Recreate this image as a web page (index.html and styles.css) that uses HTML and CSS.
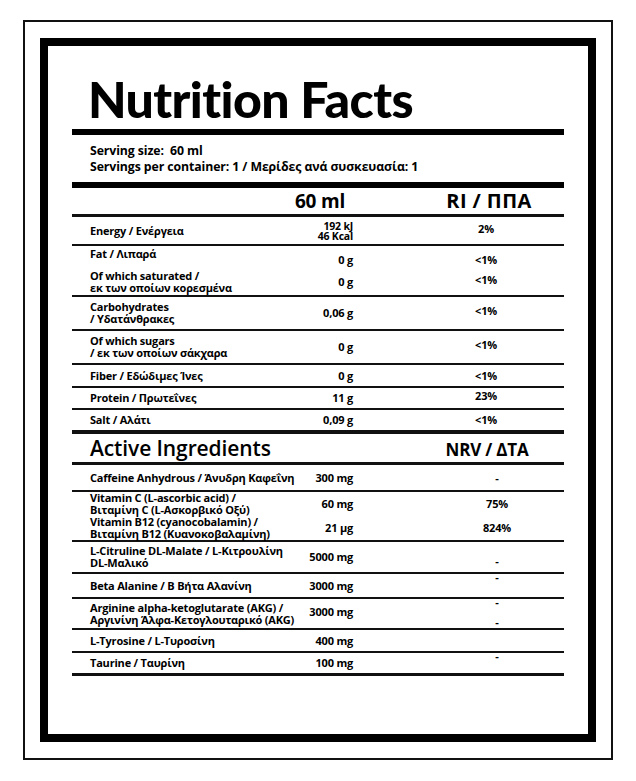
FILE: index.html
```html
<!DOCTYPE html>
<html lang="el">
<head>
<meta charset="utf-8">
<title>Nutrition Facts</title>
<link rel="stylesheet" href="styles.css">
</head>
<body>
<div class="frame">
  <div class="label">
    <h1 class="title">Nutrition Facts</h1>
    <div class="serving">
      <div>Serving size:&nbsp; 60 ml</div>
      <div>Servings per container: 1 / Μερίδες ανά συσκευασία: 1</div>
    </div>

    <div class="nrow head">
      <span></span>
      <span class="val head-val">60 ml</span>
      <span></span>
      <span class="pct head-pct">RI / ΠΠΑ</span>
    </div>
    <div class="nrow energy">
      <span class="lbl">Energy / Ενέργεια</span>
      <span class="val stack"><span>192 kJ</span><span>46 Kcal</span></span>
      <span></span>
      <span class="pct up">2%</span>
    </div>
    <div class="nrow fat nb">
      <span class="lbl top">Fat / Λιπαρά</span>
      <span class="val bottom">0 g</span>
      <span></span>
      <span class="pct bottom">&lt;1%</span>
    </div>
    <div class="nrow sat">
      <span class="lbl two">Of which saturated /<br>εκ των οποίων κορεσμένα</span>
      <span class="val">0 g</span>
      <span></span>
      <span class="pct up">&lt;1%</span>
    </div>
    <div class="nrow carbs">
      <span class="lbl two">Carbohydrates<br>/ Υδατάνθρακες</span>
      <span class="val">0,06 g</span>
      <span></span>
      <span class="pct up">&lt;1%</span>
    </div>
    <div class="nrow sugars">
      <span class="lbl two">Of which sugars<br>/ εκ των οποίων σάκχαρα</span>
      <span class="val">0 g</span>
      <span></span>
      <span class="pct up">&lt;1%</span>
    </div>
    <div class="nrow fiber">
      <span class="lbl">Fiber / Εδώδιμες Ίνες</span>
      <span class="val">0 g</span>
      <span></span>
      <span class="pct">&lt;1%</span>
    </div>
    <div class="nrow protein">
      <span class="lbl">Protein / Πρωτεΐνες</span>
      <span class="val">11 g</span>
      <span></span>
      <span class="pct up">23%</span>
    </div>
    <div class="nrow salt">
      <span class="lbl">Salt / Αλάτι</span>
      <span class="val">0,09 g</span>
      <span></span>
      <span class="pct">&lt;1%</span>
    </div>

    <div class="arow ahead">
      <span class="atitle">Active Ingredients</span>
      <span></span>
      <span></span>
      <span class="nrv-head">NRV / ΔΤΑ</span>
    </div>
    <div class="arow caffeine">
      <span class="lbl">Caffeine Anhydrous / Άνυδρη Καφεΐνη</span>
      <span class="val">300 mg</span>
      <span></span>
      <span class="nrv">-</span>
    </div>
    <div class="arow vitc nb">
      <span class="lbl two">Vitamin C (L-ascorbic acid) /<br>Βιταμίνη C (L-Ασκορβικό Οξύ)</span>
      <span class="val">60 mg</span>
      <span></span>
      <span class="nrv">75%</span>
    </div>
    <div class="arow b12">
      <span class="lbl two">Vitamin B12 (cyanocobalamin) /<br>Βιταμίνη B12 (Κυανοκοβαλαμίνη)</span>
      <span class="val">21 μg</span>
      <span></span>
      <span class="nrv">824%</span>
    </div>
    <div class="arow citrul">
      <span class="lbl two">L-Citruline DL-Malate / L-Κιτρουλίνη<br>DL-Μαλικό</span>
      <span class="val">5000 mg</span>
      <span></span>
      <span class="nrv down">-</span>
    </div>
    <div class="arow beta">
      <span class="lbl">Beta Alanine / B Βήτα Αλανίνη</span>
      <span class="val">3000 mg</span>
      <span></span>
      <span class="nrv top">-</span>
    </div>
    <div class="arow argin">
      <span class="lbl two">Arginine alpha-ketoglutarate (AKG) /<br>Αργινίνη Άλφα-Κετογλουταρικό (AKG)</span>
      <span class="val up">3000 mg</span>
      <span></span>
      <span class="nrv split"><span>-</span><span>-</span></span>
    </div>
    <div class="arow tyro">
      <span class="lbl">L-Tyrosine / L-Τυροσίνη</span>
      <span class="val">400 mg</span>
      <span></span>
      <span class="nrv"></span>
    </div>
    <div class="arow taurine last">
      <span class="lbl">Taurine / Ταυρίνη</span>
      <span class="val">100 mg</span>
      <span></span>
      <span class="nrv top">-</span>
    </div>
  </div>
</div>
</body>
</html>
```

FILE: styles.css
```css
* { box-sizing: border-box; }

body {
  margin: 0;
  background: #fff;
  color: #000;
  font-family: "Open Sans", "Noto Sans", sans-serif;
}

.frame {
  margin: 20px 0 0 23px;
  width: 590px;
  height: 740px;
  border: 2px solid #111;
  padding: 16px 15px;
}

.label {
  height: 704px;
  border: 8px solid #000;
  padding: 0 24px;
}

.title {
  margin: 0;
  padding: 28px 0 0 16px;
  height: 89px;
  font-family: Lato, "Open Sans", sans-serif;
  font-weight: 900;
  font-size: 50px;
  line-height: 50px;
  letter-spacing: -0.6px;
  border-bottom: 6px solid #000;
}

.serving {
  padding: 8px 0 0 18px;
  height: 53px;
  font-weight: 700;
  font-size: 12.3px;
  line-height: 16px;
  letter-spacing: -0.1px;
  border-bottom: 6px solid #000;
}

.nrow,
.arow {
  display: grid;
  padding-left: 18px;
  font-weight: 700;
  font-size: 11px;
  line-height: 12px;
  letter-spacing: -0.2px;
  border-bottom: 2px solid #111;
  align-items: center;
  white-space: nowrap;
}

.nrow { grid-template-columns: 193px 70px 55px 156px; }
.arow { grid-template-columns: 212px 51px 77px 134px; }

.nb { border-bottom: 0; }

.val { text-align: right; }
.pct, .nrv, .nrv-head { text-align: center; }

.head { height: 29px; border-bottom-width: 3px; }
.head-val, .head-pct { font-size: 19px; line-height: 22px; letter-spacing: -0.2px; }
.head-val { padding-right: 8px; }
.head-pct { padding-left: 6px; font-size: 20px; letter-spacing: 0.4px; }

.energy { height: 29px; }
.stack {
  display: flex;
  flex-direction: column;
  align-items: flex-end;
  font-size: 10.5px;
  line-height: 10px;
}
.up { position: relative; top: -2px; }
.top { align-self: start; padding-top: 2px; }
.bottom { align-self: end; padding-bottom: 2px; }

.fat { height: 22px; }
.sat { height: 29px; }
.carbs { height: 34px; }
.sugars { height: 34px; }
.fiber { height: 23px; }
.protein { height: 22px; }
.salt { height: 24px; border-bottom-width: 4px; }

.ahead { height: 31px; border-bottom-width: 3px; }
.atitle { font-size: 21px; font-weight: 600; line-height: 22px; letter-spacing: -0.1px; }
.nrv-head { font-size: 17px; line-height: 20px; position: relative; top: 2px; left: -10px; }

.caffeine { height: 27px; }
.vitc { height: 24px; }
.b12 { height: 26px; }
.citrul { height: 32px; }
.beta { height: 25px; }
.argin { height: 31px; }
.tyro { height: 23px; }
.taurine { height: 23px; }
.last { border-bottom-width: 3px; }

.down { position: relative; top: 4px; }
.nrv.top { padding-top: 0; position: relative; top: -3px; }
.split {
  align-self: stretch;
  display: flex;
  flex-direction: column;
  justify-content: space-between;
  padding: 0;
}
.split span:first-child { position: relative; top: -3px; }
```
